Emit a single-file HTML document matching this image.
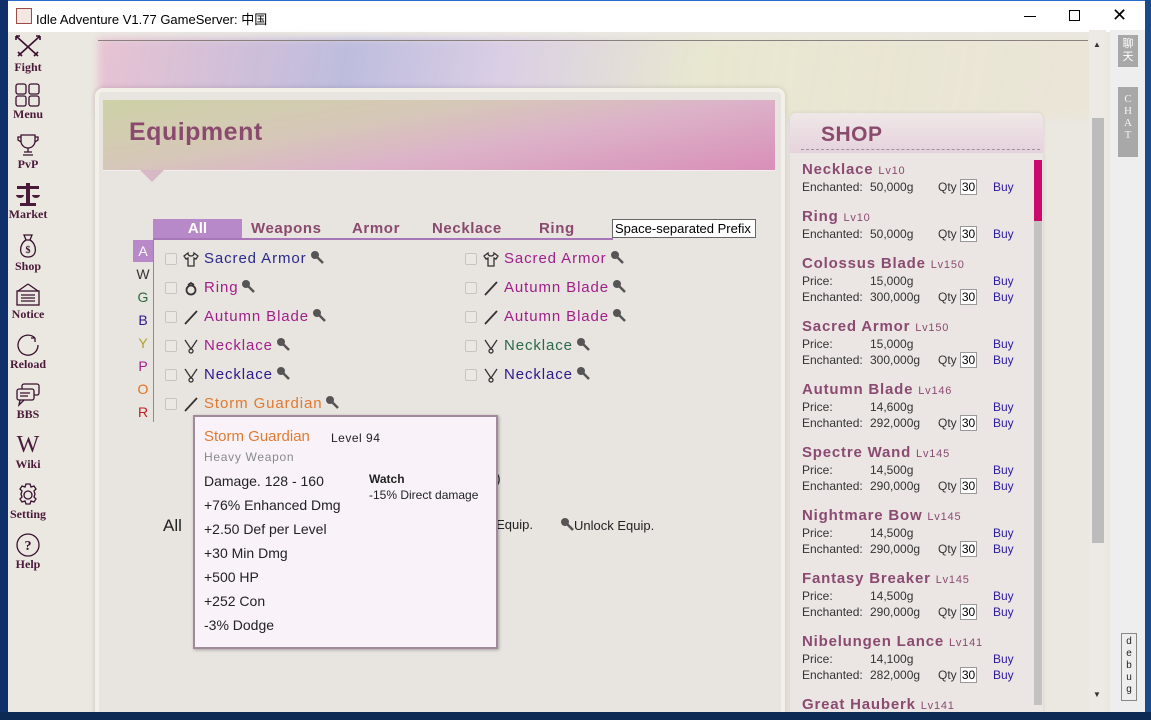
<!DOCTYPE html>
<html><head><meta charset="utf-8"><style>
*{margin:0;padding:0;box-sizing:border-box}
html,body{width:1151px;height:720px;overflow:hidden}
body{background:#0d2a55;font-family:"Liberation Sans","Noto Sans CJK SC",sans-serif;position:relative}
.abs{position:absolute}
#win{left:8px;top:0;width:1137px;height:712px;background:#ebe8e2;overflow:hidden}
#title{left:0;top:0;width:1137px;height:32px;background:#fff;border-top:1px solid #2b6bc7}
#title .t{left:28px;top:8px;font-size:13px;color:#000}
.nav{width:40px;text-align:center;font-family:"Liberation Serif",serif;font-weight:bold;font-size:12px;color:#4a1a3a}
.nav svg{display:block;margin:0 auto}
.eq{font-size:15px;letter-spacing:.9px;white-space:nowrap}
.ic{position:absolute;width:16px;height:16px}
.chk{width:12px;height:12px;border:1px solid #c8c4c0;background:#ebe8e3;border-radius:2px}
.key{display:inline-block;width:14px;height:14px;vertical-align:-1px;margin-left:3px}
.sh{font-size:12px;color:#333}
.sn{font-size:15px;font-weight:bold;color:#8a4a72;letter-spacing:.8px}
.sn small{font-size:11px;font-weight:normal;color:#8a4a72}
.buy{color:#2a1aa0}
.qty{display:inline-block;width:17px;height:16px;background:#fff;border:1px solid #999;font-size:12px;text-align:center;line-height:14px;color:#000}
</style></head><body>
<svg width="0" height="0" style="position:absolute"><defs>
<g id="k"><circle cx="5" cy="5" r="4" fill="#555"/><path d="M7 7l6 6" stroke="#555" stroke-width="2.5"/></g>
<g id="shirt" fill="none" stroke="#333" stroke-width="1.3"><path d="M5 2L1 5l2 3 2-1v8h6V7l2 1 2-3-4-3c0 2-1 3-3 3S5 4 5 2z"/></g>
<g id="ring" fill="none" stroke="#333" stroke-width="1.8"><circle cx="8" cy="10" r="4.5"/><path d="M5 5l3-2 3 2"/></g>
<g id="blade" stroke="#333" stroke-width="1.8"><path d="M2 15L14 2"/></g>
<g id="neck" fill="none" stroke="#333" stroke-width="1.3"><path d="M2 2l6 9 6-9"/><circle cx="8" cy="13" r="2"/></g>
</defs></svg>
<div class="abs" style="left:0;top:0;width:8px;height:720px;background:#10306a"></div>
<div id="win" class="abs">
 <div id="title" class="abs">
  <div class="abs" style="left:8px;top:7px;width:16px;height:16px;border:1px solid #9b4a4a;background:#f4e6e0"></div>
  <div class="abs t">Idle Adventure V1.77 GameServer: 中国</div>
  <div class="abs" style="left:1016px;top:15px;width:12px;height:1px;background:#000"></div>
  <div class="abs" style="left:1061px;top:9px;width:11px;height:11px;border:1px solid #000"></div>
  <div class="abs" style="left:1104px;top:4px;font-size:18px;color:#000">✕</div>
 </div>
 <div class="abs" style="left:90px;top:38px;width:1000px;height:80px;background:linear-gradient(100deg,rgba(230,170,200,.6) 0%,rgba(170,170,220,.7) 25%,rgba(200,180,230,.5) 40%,rgba(230,230,190,.5) 60%,rgba(235,225,200,.4) 100%);filter:blur(4px)"></div>
 <div class="abs" style="left:90px;top:40px;width:990px;height:1px;background:#8a8080"></div>
 <!-- sidebar -->
 <div class="abs nav" style="left:0;top:34px"><svg width="28" height="26" viewBox="0 0 28 26" fill="none" stroke="#3a1030" stroke-width="1.6"><path d="M2 2l22 20M26 2L4 22M2 2l4 0M2 2l0 4M26 2l-4 0M26 2v4M20 22l4-4M8 22l-4-4"/></svg>Fight</div>
 <div class="abs nav" style="left:0;top:83px"><svg width="26" height="24" viewBox="0 0 26 24" fill="none" stroke="#3a1030" stroke-width="1.3"><rect x="1" y="1" width="10" height="10" rx="2"/><rect x="14" y="1" width="10" height="10" rx="2"/><rect x="1" y="13" width="10" height="10" rx="2"/><rect x="14" y="13" width="10" height="10" rx="2"/></svg>Menu</div>
 <div class="abs nav" style="left:0;top:133px"><svg width="22" height="24" viewBox="0 0 22 24" fill="none" stroke="#3a1030" stroke-width="1.3"><path d="M4 2h14v6a7 7 0 0 1-14 0z M4 4H1v3l3 2M18 4h3v3l-3 2M11 15v4M6 22h10M7 19h8"/></svg>PvP</div>
 <div class="abs nav" style="left:0;top:183px"><svg width="26" height="24" viewBox="0 0 26 24" fill="#4a1a3a"><rect x="2" y="3" width="22" height="3"/><rect x="11" y="0" width="4" height="20"/><rect x="5" y="20" width="16" height="3"/><path d="M1 12h8a4 3 0 0 1-8 0zM17 12h8a4 3 0 0 1-8 0z"/></svg>Market</div>
 <div class="abs nav" style="left:0;top:233px"><svg width="22" height="26" viewBox="0 0 22 26" fill="none" stroke="#3a1030" stroke-width="1.3"><path d="M7 2h8l-2 5h-4zM9 7C2 11 1 24 11 24s9-13 2-17"/><text x="11" y="20" font-size="10" text-anchor="middle" fill="#3a1030" stroke="none">$</text></svg>Shop</div>
 <div class="abs nav" style="left:0;top:283px"><svg width="26" height="24" viewBox="0 0 26 24" fill="none" stroke="#3a1030" stroke-width="1.3"><path d="M13 1L3 8M13 1l10 7"/><rect x="2" y="8" width="22" height="14"/><path d="M6 12h14M6 15h14M6 18h14"/></svg>Notice</div>
 <div class="abs nav" style="left:0;top:333px"><svg width="26" height="24" viewBox="0 0 26 24" fill="none" stroke="#3a1030" stroke-width="1.3"><path d="M20 5A10 10 0 1 0 23 12M20 5l0 4M20 5l-4 0"/></svg>Reload</div>
 <div class="abs nav" style="left:0;top:383px"><svg width="26" height="24" viewBox="0 0 26 24" fill="none" stroke="#3a1030" stroke-width="1.3"><rect x="7" y="1" width="17" height="11" rx="2"/><rect x="2" y="6" width="17" height="11" rx="2" fill="#ebe8e2"/><path d="M5 17l-1 5 5-5M5 10h10M5 13h8"/></svg>BBS</div>
 <div class="abs nav" style="left:0;top:433px"><div style="font-size:24px;font-weight:normal;line-height:24px">W</div>Wiki</div>
 <div class="abs nav" style="left:0;top:483px"><svg width="26" height="24" viewBox="0 0 26 24" fill="none" stroke="#3a1030" stroke-width="1.3"><circle cx="13" cy="12" r="4"/><path d="M11 1h4l1 3 3-1 2 3-2 2 1 3-1 3 2 2-2 3-3-1-1 3h-4l-1-3-3 1-2-3 2-2-1-3 1-3-2-2 2-3 3 1z"/></svg>Setting</div>
 <div class="abs nav" style="left:0;top:533px"><svg width="26" height="24" viewBox="0 0 26 24" fill="none" stroke="#3a1030" stroke-width="1.3"><circle cx="13" cy="12" r="11"/><text x="13" y="17" font-size="14" text-anchor="middle" fill="#3a1030" stroke="none">?</text></svg>Help</div>

 <!-- Equipment panel -->
 <div class="abs" style="left:87px;top:88px;width:690px;height:640px;background:#e8e4e0;border:4px solid #f2f0e8;border-radius:8px;box-shadow:0 0 6px rgba(0,0,0,.15)"></div>
 <div class="abs" style="left:95px;top:100px;width:672px;height:70px;background:linear-gradient(170deg,#cdd2a6 0%,#d6c8b8 35%,#dcb3c8 60%,#d98fb8 100%)"></div>
 <div class="abs" style="left:95px;top:170px;width:672px;height:1px;background:#f4eef0"></div>
 <div class="abs" style="left:132px;top:170px;width:0;height:0;border-left:12px solid transparent;border-right:12px solid transparent;border-top:12px solid #d6b8c6"></div>
 <div class="abs" style="left:121px;top:118px;font-size:25px;font-weight:bold;color:#8a4a6e;letter-spacing:.5px">Equipment</div>

 <!-- tabs -->
 <div class="abs" style="left:145px;top:219px;width:89px;height:20px;background:#b889c8;color:#fff;font-weight:bold;font-size:15px;text-align:center;line-height:20px">All</div>
 <div class="abs" style="font-weight:bold;font-size:15px;color:#8a4a6e;top:220px;left:243px;letter-spacing:.6px">Weapons</div>
 <div class="abs" style="font-weight:bold;font-size:15px;color:#8a4a6e;top:220px;left:344px;letter-spacing:.6px">Armor</div>
 <div class="abs" style="font-weight:bold;font-size:15px;color:#8a4a6e;top:220px;left:424px;letter-spacing:.6px">Necklace</div>
 <div class="abs" style="font-weight:bold;font-size:15px;color:#8a4a6e;top:220px;left:531px;letter-spacing:.6px">Ring</div>
 <div class="abs" style="left:145px;top:238px;width:460px;height:2px;background:#a877b8"></div>
 <div class="abs" style="left:604px;top:219px;width:144px;height:19px;background:#fff;border:1px solid #666;font-size:13px;line-height:17px;padding-left:2px;color:#000;overflow:hidden;white-space:nowrap">Space-separated Prefix</div>
 <div class="abs" style="left:145px;top:238px;width:1px;height:184px;background:#a877b8"></div>
 <div class="abs" style="left:125px;top:240px;width:20px;height:22px;background:#b889c8"></div>
 <div class="abs" style="left:125px;font-size:14px;width:20px;text-align:center;line-height:23px;top:240px">
  <div style="color:#fff">A</div><div style="color:#333">W</div><div style="color:#2a6a3a">G</div><div style="color:#2a1a8a">B</div><div style="color:#b0a030">Y</div><div style="color:#a0208a">P</div><div style="color:#e07020">O</div><div style="color:#c02020">R</div>
 </div>
 <div id="items"></div>

 <div class="abs" style="left:155px;top:516px;font-size:17px;color:#222">All</div>
 <div class="abs" style="left:488px;top:470px;font-size:14px;color:#222">)</div>
 <div class="abs" style="left:478px;top:517px;font-size:13px;color:#222">k Equip.</div>
 <div class="abs" style="left:552px;top:517px;font-size:13px;color:#222"><svg class="key" viewBox="0 0 14 14" style="margin:0"><use href="#k"/></svg>Unlock Equip.</div>

 <!-- tooltip -->
 <div class="abs" style="left:185px;top:415px;width:305px;height:234px;background:#f9f3f9;border:2px solid #a08a9c;box-shadow:1px 1px 3px rgba(0,0,0,.3)">
  <div class="abs" style="left:9px;top:11px;font-size:15px;color:#e07a30">Storm Guardian</div>
  <div class="abs" style="left:136px;top:14px;font-size:12px;color:#222;letter-spacing:.5px">Level 94</div>
  <div class="abs" style="left:9px;top:33px;font-size:12px;color:#888;letter-spacing:.7px">Heavy Weapon</div>
  <div class="abs" style="left:9px;top:52px;font-size:14px;color:#222;line-height:24px">Damage. 128 - 160<br>+76% Enhanced Dmg<br>+2.50 Def per Level<br>+30 Min Dmg<br>+500 HP<br>+252 Con<br>-3% Dodge</div>
  <div class="abs" style="left:174px;top:55px;font-size:12px;font-weight:bold;color:#222">Watch</div>
  <div class="abs" style="left:174px;top:71px;font-size:12px;color:#222">-15% Direct damage</div>
 </div>

 <!-- shop -->
 <div class="abs" style="left:782px;top:113px;width:253px;height:610px;background:#ebe6e3;border-radius:6px;box-shadow:0 0 4px rgba(0,0,0,.1)"></div>
 <div class="abs" style="left:782px;top:113px;width:253px;height:40px;background:linear-gradient(180deg,#efe8e8,#e6d2dc);border-radius:6px 6px 0 0"></div>
 <div class="abs" style="left:793px;top:149px;width:239px;height:1px;border-top:1px dashed #a09098"></div>
 <div class="abs" style="left:813px;top:123px;font-size:21px;font-weight:bold;color:#8a4a6e;letter-spacing:.5px">SHOP</div>
 <div class="abs" style="left:1026px;top:160px;width:8px;height:545px;background:#c4c2c0"></div>
 <div class="abs" style="left:1026px;top:160px;width:8px;height:61px;background:#cc0a6e"></div>
 <div id="shop"></div>

 <div class="abs" style="left:1081px;top:30px;width:17px;height:682px;background:#ede9e5"></div>
 <div class="abs" style="left:1084px;top:118px;width:12px;height:425px;background:#bcbcbc"></div>
 <div class="abs" style="left:1085px;top:40px;font-size:8px;color:#333">▲</div>
 <div class="abs" style="left:1085px;top:690px;font-size:8px;color:#333">▼</div>
 <div class="abs" style="left:1102px;top:30px;width:35px;height:682px;background:#eeeeee"></div>
 <div class="abs" style="left:1110px;top:35px;width:20px;height:32px;background:#a8a8a8;color:#fff;font-size:11px;text-align:center;line-height:13px;padding-top:3px">聊<br>天</div>
 <div class="abs" style="left:1110px;top:87px;width:20px;height:70px;background:#a8a8a8;color:#f4f4f4;font-family:'Liberation Serif',serif;font-size:11px;text-align:center;line-height:12px;padding-top:6px">C<br>H<br>A<br>T</div>
 <div class="abs" style="left:1113px;top:633px;width:16px;height:68px;border:1px solid #888;background:#eee;font-family:'Liberation Mono',monospace;font-size:10px;text-align:center;line-height:12px;padding-top:3px;color:#222">d<br>e<br>b<br>u<br>g</div>
</div>
<div class="abs" style="left:1145px;top:0;width:6px;height:720px;background:#1a4a8a"></div>
<div class="abs" style="left:0;top:712px;width:1151px;height:8px;background:#0d2a55"></div>
<script>
var L=[["shirt","Sacred Armor","#2a2a8a"],["ring","Ring","#a0208a"],["blade","Autumn Blade","#a0208a"],["neck","Necklace","#a0208a"],["neck","Necklace","#2a1a8a"],["blade","Storm Guardian","#e07a30"]];
var R=[["shirt","Sacred Armor","#a0208a"],["blade","Autumn Blade","#a0208a"],["blade","Autumn Blade","#a0208a"],["neck","Necklace","#2a6a4a"],["neck","Necklace","#2a1a8a"]];
var s="";
function row(a,i,x){var y=251+i*29;
 s+='<div class="abs chk" style="left:'+(x)+'px;top:'+(y+2)+'px"></div>';
 s+='<svg class="ic" style="left:'+(x+18)+'px;top:'+y+'px" viewBox="0 0 16 16"><use href="#'+a[0]+'"/></svg>';
 s+='<div class="abs eq" style="left:'+(x+39)+'px;top:'+(y-1)+'px;color:'+a[2]+'">'+a[1]+'<svg class="key" viewBox="0 0 14 14"><use href="#k"/></svg></div>';}
L.forEach(function(a,i){row(a,i,157)});R.forEach(function(a,i){row(a,i,457)});
document.getElementById("items").outerHTML=s;
var items=[["Necklace","Lv10",0],["Ring","Lv10",0],["Colossus Blade","Lv150","15,000g","300,000g"],["Sacred Armor","Lv150","15,000g","300,000g"],["Autumn Blade","Lv146","14,600g","292,000g"],["Spectre Wand","Lv145","14,500g","290,000g"],["Nightmare Bow","Lv145","14,500g","290,000g"],["Fantasy Breaker","Lv145","14,500g","290,000g"],["Nibelungen Lance","Lv141","14,100g","282,000g"],["Great Hauberk","Lv141","14,100g","282,000g"]];
var h="",y=161;
items.forEach(function(it){
 h+='<div class="abs sn" style="left:794px;top:'+y+'px">'+it[0]+' <small>'+it[1]+'</small></div>';
 var ly=y+19;
 if(it[2]){h+='<div class="abs sh" style="left:794px;top:'+ly+'px">Price:</div><div class="abs sh" style="left:862px;top:'+ly+'px">'+it[2]+'</div><div class="abs sh buy" style="left:985px;top:'+ly+'px">Buy</div>';ly+=16;}
 h+='<div class="abs sh" style="left:794px;top:'+ly+'px">Enchanted:</div><div class="abs sh" style="left:862px;top:'+ly+'px">'+(it[3]||"50,000g")+'</div><div class="abs sh" style="left:930px;top:'+(ly-1)+'px">Qty <span class="qty">30</span></div><div class="abs sh buy" style="left:985px;top:'+ly+'px">Buy</div>';
 y+=it[2]?63:47;
});
document.getElementById("shop").outerHTML=h;
</script>
</body></html>
